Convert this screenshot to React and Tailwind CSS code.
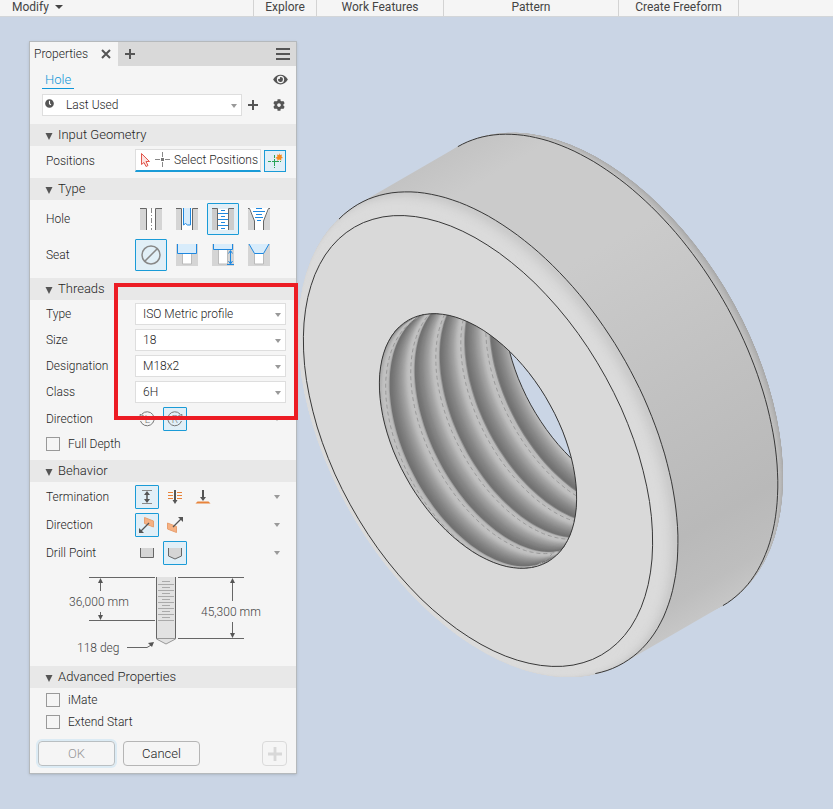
import React, { useState } from 'react';
import { FaClock, FaCog, FaEye } from 'react-icons/fa';

const RIBBON_GROUPS = [
  { label: 'Explore', width: 'w-[63px]' },
  { label: 'Work Features', width: 'w-[127px]' },
  { label: 'Pattern', width: 'w-[175px]' },
  { label: 'Create Freeform', width: 'w-[120px]' },
];

// Isometric projection helpers: the part's axis points up and to the right
const AXIS = [0.866, -0.5];
const MAJOR = [0.5, 0.866];
const FRONT = [478, 441];
const SQUASH = 0.5774;

const point = (r, angle, depth) => {
  const t = (angle * Math.PI) / 180;
  const u = r * Math.cos(t);
  const v = depth - r * SQUASH * Math.sin(t);
  return [FRONT[0] + u * MAJOR[0] + v * AXIS[0], FRONT[1] + u * MAJOR[1] + v * AXIS[1]];
};

const toPath = (pts) => 'M' + pts.map(([x, y]) => `${x.toFixed(1)} ${y.toFixed(1)}`).join('L');

const arc = (r, from, to, depth) => {
  const pts = [];
  for (let i = 0; i <= 90; i++) {
    const angle = from + ((to - from) * i) / 90;
    pts.push(point(r, angle, typeof depth === 'function' ? depth(angle) : depth));
  }
  return toPath(pts);
};

const gray = (n) => `rgb(${Math.round(n)},${Math.round(n)},${Math.round(n)})`;

const RADIUS = 265;
const BORE = 139.5;
const FILLET = 18;
const FILLET_DEPTH = 14.5;
const LENGTH = 115.3;
const PITCH = 28.9;

const FILLET_STEPS = Array.from({ length: 31 }, (_, i) => (i * Math.PI) / 60);

const THREAD_PROFILE = [[0, 194], [0.15, 184], [0.19, 112], [0.28, 116], [0.5, 136], [0.72, 162], [0.9, 190], [1, 194]];

const threadShade = (depth) => {
  const f = (((depth - 5.3) / PITCH) % 1 + 1) % 1;
  const i = THREAD_PROFILE.findIndex(([stop]) => stop >= f);
  if (i <= 0) return gray(194);
  const [a, va] = THREAD_PROFILE[i - 1];
  const [b, vb] = THREAD_PROFILE[i];
  return gray(va + ((vb - va) * (f - a)) / (b - a));
};

const helix = (start) => (angle) => start + (PITCH * (angle - 134)) / 360;

const THREAD_BANDS = Array.from({ length: 190 }, (_, i) => i - 25);
const CRESTS = [5.3, 34.2, 63.1, 92, 120.9];

function Nut() {
  const rear = FILLET_DEPTH + LENGTH;
  const body = toPath([
    point(RADIUS, 180, FILLET_DEPTH),
    point(RADIUS, 180, rear),
    point(RADIUS, 0, rear),
    point(RADIUS, 0, FILLET_DEPTH),
  ]);

  return (
    <svg
      className="absolute inset-0 w-full h-full"
      viewBox="0 17 833 792"
      preserveAspectRatio="xMinYMin meet"
      role="img"
      aria-label="Threaded ring"
    >
      <defs>
        <linearGradient id="side" gradientUnits="userSpaceOnUse" x1="408" y1="175" x2="673" y2="634">
          <stop offset="0" stopColor="#c3c3c3" />
          <stop offset="0.08" stopColor="#cbcbcb" />
          <stop offset="0.3" stopColor="#cbcbcb" />
          <stop offset="0.6" stopColor="#c1c1c1" />
          <stop offset="0.85" stopColor="#b9b9b9" />
          <stop offset="0.95" stopColor="#bebebe" />
          <stop offset="1" stopColor="#c6c6c6" />
        </linearGradient>
        <clipPath id="bore">
          <path d={arc(BORE, 0, 360, 0)} />
        </clipPath>
      </defs>

      {/* Rear fillet, farthest ring first */}
      {[...FILLET_STEPS].reverse().map((phi) => (
        <path
          key={phi}
          d={arc(RADIUS - FILLET + FILLET * Math.cos(phi), 0, 360, rear + FILLET_DEPTH * Math.sin(phi))}
          fill={gray(196 - 38 * Math.sin(phi))}
        />
      ))}
      <path d={arc(RADIUS, 0, 360, rear)} fill="url(#side)" />
      <path d={body} fill="url(#side)" />
      <path d={arc(RADIUS, 180, 360, rear)} fill="none" stroke="#383838" />

      {/* Front fillet and face */}
      {[...FILLET_STEPS].reverse().map((phi) => (
        <path
          key={phi}
          d={arc(RADIUS - FILLET + FILLET * Math.sin(phi), 0, 360, FILLET_DEPTH * (1 - Math.cos(phi)))}
          fill={gray(219 - 17 * Math.pow(Math.sin(phi), 6))}
        />
      ))}
      <path d={arc(RADIUS, 171, 371, FILLET_DEPTH)} fill="none" stroke="#383838" />
      <path d={arc(RADIUS - FILLET, 0, 360, 0)} fill="#d9d9d9" stroke="#383838" />

      {/* Threaded bore */}
      <g clipPath="url(#bore)">
        <path d={arc(BORE, 0, 360, 0)} fill="#8a8a8a" />
        {THREAD_BANDS.map((d) => (
          <path key={d} d={arc(137, 200, -20, helix(d))} fill="none" stroke={threadShade(d)} strokeWidth="2" />
        ))}
        {CRESTS.map((d) => (
          <path key={d} d={arc(137, 190, -10, helix(d))} fill="none" stroke="#999999" strokeDasharray="4 3" />
        ))}
        <path d={arc(BORE, 0, 360, rear + FILLET_DEPTH)} fill="#cad5e5" stroke="#383838" />
      </g>
      <path d={arc(BORE, 0, 360, 0)} fill="none" stroke="#383838" />
    </svg>
  );
}

function Caret({ className = '' }) {
  return (
    <svg className={`w-[6px] h-1 fill-[#999999] pointer-events-none ${className}`} viewBox="0 0 6 4">
      <path d="M0 0h6L3 4z" />
    </svg>
  );
}

function Plus({ className = '' }) {
  return (
    <svg className={className} viewBox="0 0 10 10">
      <path d="M4 0h2v4h4v2H6v4H4V6H0V4h4z" />
    </svg>
  );
}

function Section({ title, children }) {
  return (
    <section>
      <h2 className="h-[22px] bg-[#e8e8e8]">
        <button type="button" className="w-full h-full flex items-center gap-[5px] pl-[15px] text-[13px]">
          <svg className="w-2 h-2 mt-0.5 fill-[#555555]" viewBox="0 0 8 8">
            <path d="M.5 1h7L4 8z" />
          </svg>
          {title}
        </button>
      </h2>
      {children}
    </section>
  );
}

function Row({ label, children, className = '' }) {
  return (
    <div className={`flex items-center pl-4 pr-2.5 ${className}`} role="group" aria-label={label}>
      <span className="w-[89px] shrink-0">{label}</span>
      {children}
    </div>
  );
}

function SelectRow({ id, label, options }) {
  return (
    <div className="flex items-center pl-4 pr-2.5">
      <label htmlFor={id} className="w-[89px] shrink-0">{label}</label>
      <div className="relative flex-1">
        <select id={id} className="appearance-none block w-full h-[22px] pl-[7px] pr-5 bg-white border border-[#dedede]">
          {options.map((option) => (
            <option key={option}>{option}</option>
          ))}
        </select>
        <Caret className="absolute right-[5px] top-[10px]" />
      </div>
    </div>
  );
}

function IconButton({ label, active, onClick, size = 'w-6 h-6', children }) {
  return (
    <button
      type="button"
      aria-label={label}
      aria-pressed={active}
      onClick={onClick}
      className={`${size} shrink-0 flex items-center justify-center border rounded-[1px] ${active ? 'border-[#1a9bd7] bg-[#e1eff7]' : 'border-transparent'}`}
    >
      {children}
    </button>
  );
}

function Check({ id, label }) {
  return (
    <div className="flex items-center gap-2 h-[22px] pl-4">
      <input id={id} type="checkbox" className="appearance-none w-3.5 h-3.5 border border-[#999999] bg-[#f5f5f5] checked:bg-[#1a9bd7]" />
      <label htmlFor={id}>{label}</label>
    </div>
  );
}

const HOLE_ICONS = {
  Simple: (
    <>
      <path d="M0 1h6v21H0zM16 1h6v21h-6z" fill="#d5d5d5" />
      <path d="M7 1h8v21H7z" fill="#fff" />
      <path d="M0 .5h6.500V22M22 .5h-6.500V22" stroke="#666" fill="none" />
      <path d="M11.500 0v22" stroke="#888" strokeDasharray="5 2 1 2" />
    </>
  ),
  Clearance: (
    <>
      <path d="M0 1h5v21H0zM17 1h5v21h-5z" fill="#d5d5d5" />
      <path d="M6 1h10v21H6z" fill="#fff" />
      <path d="M0 .5h5.500V22M22 .5h-5.500V22" stroke="#666" fill="none" />
      <path d="M7.500 0v17l2-1.500 2 1.500h3V0" stroke="#1e88e0" fill="#d8ecfb" />
    </>
  ),
  Tapped: (
    <>
      <path d="M0 1h5v21H0zM17 1h5v21h-5z" fill="#cccccc" />
      <path d="M6 1h10v21H6z" fill="#fff" />
      <path d="M0 .5h5.500V22M22 .5h-5.500V22" stroke="#666" fill="none" />
      <path d="M9 2.500h4M9 8.500h4M9 14.500h4M9 20.500h4M6 5.500h10M6 11.500h10M6 17.500h10" stroke="#1e88e0" />
    </>
  ),
  'Taper Tapped': (
    <>
      <path d="M0 0l6.500 13V22H0zM22 0l-6.500 13V22H22z" fill="#d5d5d5" />
      <path d="M1 0l6 13v9h8v-9l6-13z" fill="#fff" />
      <path d="M0 .5h1.500l5 12.500v9M22 .5h-1.500l-5 12.500v9" stroke="#666" fill="none" />
      <path d="M8 .5h6M5 3.500h12M8 6.500h6M7 9.500h8M9 12.500h4" stroke="#1e88e0" />
    </>
  ),
};

const SEAT_ICONS = {
  None: (
    <g stroke="#888" strokeWidth="1.500" fill="none">
      <circle cx="11" cy="11" r="9" />
      <path d="M4.500 17.500l13-13" />
    </g>
  ),
  Counterbore: (
    <>
      <path d="M0 0h22v22H0z" fill="#d5d5d5" />
      <path d="M6.500 9h9v11h-9z" fill="#fff" stroke="#bbb" />
      <path d="M1.500 0v9.500h19V0" fill="#d8ecfb" stroke="#1e88e0" />
    </>
  ),
  Spotface: (
    <>
      <path d="M0 0h22v22H0z" fill="#d5d5d5" />
      <path d="M6.500 5h9v15h-9z" fill="#fff" stroke="#bbb" />
      <path d="M1.500 0v5.500h19V0" fill="#d8ecfb" stroke="#1e88e0" />
      <path d="M18.500 7v12M16.500 9.500l2-3 2 3M16.500 17l2 3 2-3M15 20.500h7" fill="none" stroke="#1e88e0" />
    </>
  ),
  Countersink: (
    <>
      <path d="M0 0h22v22H0z" fill="#d5d5d5" />
      <path d="M6.500 9h9v11h-9z" fill="#fff" stroke="#bbb" />
      <path d="M1 0l5.500 9.500h9L21 0" fill="#d8ecfb" stroke="#1e88e0" />
    </>
  ),
};

const TERMINATION_ICONS = {
  Distance: (
    <>
      <path d="M3 1.500h10M3 14.500h10" stroke="#888" />
      <path d="M8 4v8" stroke="#555" strokeWidth="1.500" />
      <path d="M5 6l3-4 3 4zM5 10l3 4 3-4z" fill="#555" />
    </>
  ),
  'Through All': (
    <>
      <path d="M1 3.500h5M1 6.500h5M1 9.500h5M10 3.500h5M10 6.500h5M10 9.500h5" stroke="#e8833a" />
      <path d="M8 1v11" stroke="#555" strokeWidth="2" />
      <path d="M5.500 11h5L8 15z" fill="#555" />
    </>
  ),
  To: (
    <>
      <path d="M2.500 12.500h11l2 2H.5z" fill="#e8833a" />
      <path d="M8 1v8" stroke="#555" strokeWidth="2" />
      <path d="M5 8h6L8 12z" fill="#555" />
    </>
  ),
};

const FLIP_ICONS = {
  Default: (
    <>
      <path d="M5.500.5l9 3.500v6l-9-3.500z" fill="#f5b183" stroke="#e8a070" />
      <path d="M10 6L1.500 14.500" stroke="#555" strokeWidth="1.300" />
      <path d="M0 16v-5l5 5z" fill="#555" />
    </>
  ),
  Flipped: (
    <>
      <path d="M.5 6l9 3.500v6L.5 12z" fill="#f5b183" stroke="#e8a070" />
      <path d="M6 10l8.500-8.500" stroke="#555" strokeWidth="1.300" />
      <path d="M16 0v5l-5-5z" fill="#555" />
    </>
  ),
};

const DRILL_ICONS = {
  Flat: <path d="M1.500 3v9.500h13V3" fill="#d5d5d5" stroke="#666" />,
  Angle: <path d="M1.500 3v8L8 14l6.500-3V3" fill="#d5d5d5" stroke="#666" />,
};

const HAND_ICONS = {
  'Left Hand': (
    <>
      <path d="M3 3a7 7 0 1 1-1.500 7M4.500 4.500L1 3.500l.5 4" fill="none" stroke="#777" />
      <text x="8.500" y="12" fontSize="10" textAnchor="middle" fill="#777">L</text>
    </>
  ),
  'Right Hand': (
    <>
      <path d="M13 3a7 7 0 1 0 1.500 7M11.500 4.500l3.500-1-.5 4" fill="none" stroke="#777" />
      <text x="8" y="12" fontSize="10" textAnchor="middle" fill="#777">R</text>
    </>
  ),
};

function Choice({ label, icons, initial, large, caret, className = '' }) {
  const [value, setValue] = useState(initial);
  return (
    <Row label={label} className={className}>
      <div className="flex flex-1 items-center gap-1">
        {Object.entries(icons).map(([name, drawing]) => (
          <IconButton
            key={name}
            label={name}
            active={value === name}
            onClick={() => setValue(name)}
            size={large ? 'w-8 h-8' : 'w-6 h-6'}
          >
            <svg className={large ? 'w-[22px] h-[22px]' : 'w-4 h-4'} viewBox={large ? '0 0 22 22' : '0 0 16 16'}>
              {drawing}
            </svg>
          </IconButton>
        ))}
      </div>
      {caret && <Caret className="mr-1.5" />}
    </Row>
  );
}

function DepthDiagram() {
  return (
    <svg className="block w-[198px] h-20 mx-auto" viewBox="64 576 198 80" fontSize="12" fill="#444">
      <path d="M156.500 577v62l9.500 5 10-5v-62z" fill="#e2e2e2" />
      <path d="M156.500 577v62M175.500 577v62" stroke="#666" />
      <path d="M156.500 638.500h19M156.500 639l9.500 5 9.500-5" stroke="#999" fill="none" />
      <path
        d="M162 581.500h8M162 587.500h8M162 593.500h8M162 599.500h8M162 605.500h8M162 611.500h8M162 617.500h8M158 584.500h16M158 590.500h16M158 596.500h16M158 602.500h16M158 608.500h16M158 614.500h16M158 620.500h16"
        stroke="#aaa"
      />
      <g stroke="#666" fill="none">
        <path d="M89 577.500h66M89 620.500h66M178 577.500h66M178 638.500h66" />
        <path d="M100.500 580v11M100.500 612v6M232.500 580v21M232.500 622v14M127 647.500h20l5-3" />
      </g>
      <path d="M98 583h5l-2.500-5zM98 615h5l-2.500 5zM230 583h5l-2.500-5zM230 633h5l-2.500 5zM148 643l6-1-2 5z" fill="#555" />
      <text x="69" y="606">36,000 mm</text>
      <text x="201" y="616">45,300 mm</text>
      <text x="77" y="652">118 deg</text>
    </svg>
  );
}

function PropertiesPanel() {
  return (
    <aside className="relative w-[268px] ml-[29px] bg-[#f5f5f5] border border-[#b5b9bc] shadow-sm text-xs font-light text-[#1f1f1f]">
      {/* Tabs */}
      <div className="flex items-center h-6 bg-[#d9d9d9]">
        <div className="flex items-center justify-between h-full w-[88px] pl-1 pr-[7px] bg-[#f5f5f5]">
          <span>Properties</span>
          <button type="button" aria-label="Close">
            <svg className="w-[10px] h-[10px] stroke-[#555555]" viewBox="0 0 10 10">
              <path d="M1 1l8 8M9 1L1 9" strokeWidth="2" />
            </svg>
          </button>
        </div>
        <button type="button" aria-label="Add tab" className="ml-[7px]">
          <Plus className="w-[10px] h-[10px] fill-[#555555]" />
        </button>
        <button type="button" aria-label="Menu" className="ml-auto mr-[6px]">
          <svg className="w-3.5 h-3 fill-[#555555]" viewBox="0 0 14 12">
            <path d="M0 0h14v2H0zM0 5h14v2H0zM0 10h14v2H0z" />
          </svg>
        </button>
      </div>

      {/* Feature name */}
      <div className="flex items-start justify-between pl-3 pr-2 pt-[5px]">
        <a href="#hole" className="px-[3px] h-[18px] leading-[17px] text-[13px] text-[#0f96d8] border-b border-[#0f96d8]">Hole</a>
        <button type="button" aria-label="Toggle preview" className="mt-0.5">
          <FaEye className="w-[15px] h-[13px] text-[#555555]" />
        </button>
      </div>

      {/* Preset */}
      <div className="flex items-center pl-3 pr-[11px] pt-[5px] pb-2">
        <div className="relative flex-1">
          <FaClock className="absolute left-[3px] top-[5px] w-[9px] h-[9px] text-[#555555]" />
          <select aria-label="Preset" className="appearance-none block w-full h-[22px] pl-[23px] bg-white border border-[#dedede]">
            <option>Last Used</option>
          </select>
          <Caret className="absolute right-[5px] top-[10px]" />
        </div>
        <button type="button" aria-label="Save preset" className="ml-[6px]">
          <Plus className="w-[10px] h-[10px] fill-[#555555]" />
        </button>
        <button type="button" aria-label="Settings" className="ml-[15px]">
          <FaCog className="w-3 h-3 text-[#555555]" />
        </button>
      </div>

      <Section title="Input Geometry">
        <Row label="Positions" className="pt-[3px] pb-[6px]">
          <button type="button" className="flex-1 flex items-center justify-between h-[23px] pl-1 pr-0.5 bg-white border border-[#dedede] border-b-2 border-b-[#1a9bd7] whitespace-nowrap">
            <svg className="w-[31px] h-4" viewBox="0 0 31 16">
              <path d="M1.500 1.500v11l2.500-2 2 4 2-1-2-4h3.500z" fill="#fbe3e1" stroke="#e2574c" />
              <path d="M15 7.500h5M25 7.500h5M22.500 0v5M22.500 10v5" stroke="#888" />
              <path d="M21 6h3v3h-3z" fill="#777" />
            </svg>
            Select Positions
          </button>
          <button type="button" aria-label="Create points" aria-pressed="true" className="w-[22px] h-[22px] ml-[3px] shrink-0 flex items-center justify-center bg-[#e1eff7] border border-[#1a9bd7]">
            <svg className="w-4 h-4" viewBox="0 0 16 16">
              <path d="M7.500 2v13M1 8.500h13" stroke="#28a458" strokeDasharray="3 1" />
              <path d="M5 8.500h5M7.500 6v5" stroke="#28a458" />
              <path d="M12 0l1 2 2-.5-.5 2L16 5l-2 .5.500 2L12 6.500 10 8l.5-2L8.500 5l2-1.500L10 1.500l2 .5z" fill="#f58a1f" />
            </svg>
          </button>
        </Row>
      </Section>

      <Section title="Type">
        <div className="flex flex-col gap-1 pt-[3px] pb-[7px]">
          <Choice label="Hole" icons={HOLE_ICONS} initial="Tapped" large />
          <Choice label="Seat" icons={SEAT_ICONS} initial="None" large />
        </div>
      </Section>

      <div className="relative">
        <Section title="Threads">
          <div className="flex flex-col gap-1 pt-[3px]">
            <SelectRow id="thread-type" label="Type" options={['ISO Metric profile', 'ANSI Unified Screw Threads']} />
            <SelectRow id="thread-size" label="Size" options={['18', '16', '20']} />
            <SelectRow id="thread-designation" label="Designation" options={['M18x2', 'M18x1.5']} />
            <SelectRow id="thread-class" label="Class" options={['6H', '5H']} />
            <Choice label="Direction" icons={HAND_ICONS} initial="Right Hand" caret />
          </div>
          <div className="pt-[2px] pb-[5px]">
            <Check id="full-depth" label="Full Depth" />
          </div>
        </Section>
        {/* Highlight frame */}
        <div className="absolute left-[84px] -right-0.5 top-[5px] h-[137px] border-4 border-[#ec1c24] pointer-events-none"></div>
      </div>

      <Section title="Behavior">
        <div className="flex flex-col gap-1 pt-[3px] pb-[11px]">
          <Choice label="Termination" icons={TERMINATION_ICONS} initial="Distance" caret />
          <Choice label="Direction" icons={FLIP_ICONS} initial="Default" caret />
          <Choice label="Drill Point" icons={DRILL_ICONS} initial="Angle" caret />
        </div>
        <div className="pb-[10px]">
          <DepthDiagram />
        </div>
      </Section>

      <Section title="Advanced Properties">
        <div className="pt-px">
          <Check id="imate" label="iMate" />
          <Check id="extend-start" label="Extend Start" />
        </div>
      </Section>

      {/* Footer buttons */}
      <div className="flex items-center gap-2 pl-2 pr-[9px] pt-2 pb-[7px] text-[13px]">
        <button type="button" disabled className="w-[77px] h-[25px] border border-[#b9bfc2] rounded-sm text-[#999999] ring-2 ring-[#dcebf4]">OK</button>
        <button type="button" className="w-[77px] h-[25px] border border-[#b5b5b5] rounded-sm">Cancel</button>
        <button type="button" disabled aria-label="Apply and create new" className="w-[25px] h-[25px] ml-auto flex items-center justify-center border border-[#dadada] rounded-sm">
          <Plus className="w-3.5 h-3.5 fill-[#d8d8d8]" />
        </button>
      </div>
    </aside>
  );
}

export default function App() {
  return (
    <div className="min-h-screen flex flex-col overflow-hidden bg-[#cad5e5] font-['Roboto','Liberation_Sans',sans-serif]">
      {/* Ribbon group captions */}
      <header className="flex h-[17px] shrink-0 bg-[#f5f5f5] border-b border-[#d3d6d9] text-xs leading-[14px] text-[#444444]">
        <button type="button" className="w-[254px] h-4 pl-3 pb-0.5 flex items-center gap-1.5 border-r border-[#d3d3d3]">
          Modify
          <svg className="w-2 h-1 fill-[#444444]" viewBox="0 0 8 4">
            <path d="M0 0h8L4 4z" />
          </svg>
        </button>
        {RIBBON_GROUPS.map((group) => (
          <div key={group.label} className={`${group.width} h-4 pb-0.5 flex items-center justify-center whitespace-nowrap border-r border-[#d3d3d3]`}>
            {group.label}
          </div>
        ))}
      </header>

      {/* Model view */}
      <main className="relative flex-1 pt-6 pb-9">
        <Nut />
        <PropertiesPanel />
      </main>
    </div>
  );
}
